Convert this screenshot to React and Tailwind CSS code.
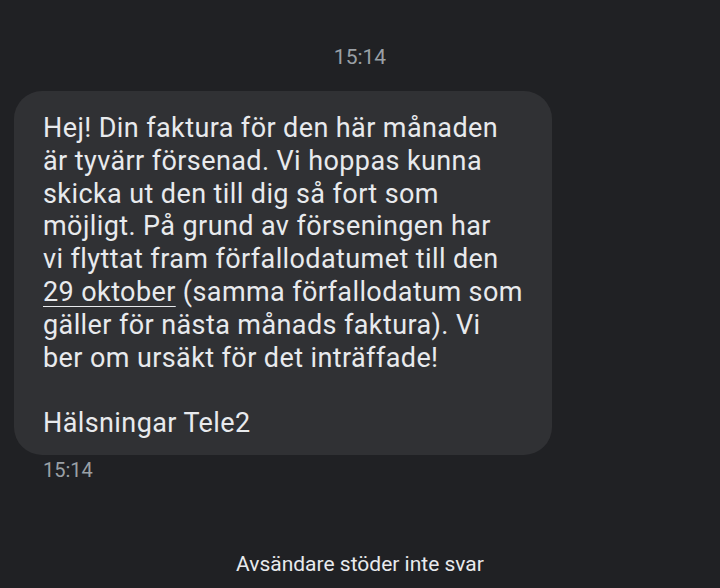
import React from 'react';

const App = () => {
  return (
    <div
      className="w-[720px] h-[588px] bg-[#202124] flex flex-col overflow-hidden"
      style={{ fontFamily: 'Roboto, "Noto Sans", sans-serif' }}
    >
      {/* date / time header */}
      <div className="pt-[45px] text-center text-[21px] leading-[24px] text-[#9aa0a6]">15:14</div>

      {/* incoming message */}
      <div className="pl-[14px] pt-[22px]">
        <div className="w-[538px] bg-[#303134] rounded-[28px] pl-[29px] pr-[12px] pt-[21px] pb-[15px] text-[27px] leading-[32.8px] tracking-[0.4px] text-[#e8eaed]">
          <p className="whitespace-nowrap">
            Hej! Din faktura för den här månaden
            <br />
            är tyvärr försenad. Vi hoppas kunna
            <br />
            skicka ut den till dig så fort som
            <br />
            möjligt. På grund av förseningen har
            <br />
            vi flyttat fram förfallodatumet till den
            <br />
            <span className="underline underline-offset-[5px] decoration-1">29 oktober</span> (samma förfallodatum som
            <br />
            gäller för nästa månads faktura). Vi
            <br />
            ber om ursäkt för det inträffade!
          </p>
          <p className="mt-[32.8px]">Hälsningar Tele2</p>
        </div>
        <div className="pl-[29px] pt-[4px] text-[20px] leading-[22px] text-[#9aa0a6]">15:14</div>
      </div>

      <div className="flex-1" />

      {/* footer notice */}
      <div className="pb-[11px] text-center text-[21px] leading-[26px] text-[#e8eaed]">
        Avsändare stöder inte svar
      </div>
    </div>
  );
};

export default App;
